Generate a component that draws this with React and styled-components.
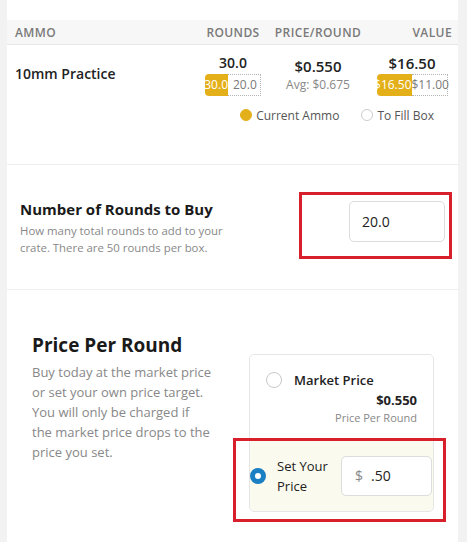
import styled, { createGlobalStyle } from "styled-components";

const GlobalStyle = createGlobalStyle`
  html, body {
    margin: 0;
    padding: 0;
    background: #f2f2f2;
    font-family: "Open Sans", "Liberation Sans", sans-serif;
    color: #222;
  }
`;

const Panel = styled.div`
  width: 451px;
  margin-left: 7px;
  background: #fff;
  padding-top: 20px;
  min-height: 560px;
`;

const COLS = "1fr 62px 108px 80px";

const HeadRow = styled.div`
  display: grid;
  grid-template-columns: ${COLS};
  height: 24px;
  align-items: center;
  padding: 0 6px 0 8px;
  background: #f7f7f7;
  border-bottom: 1px solid #e6e6e6;
`;

const HeadCell = styled.div`
  font-size: 12px;
  font-weight: 600;
  letter-spacing: 0.4px;
  color: #7a7a7a;
  text-align: ${(p) => p.$align || "left"};
`;

const DataRow = styled.div`
  display: grid;
  grid-template-columns: ${COLS};
  padding: 9px 6px 0 8px;
  align-items: start;
`;

const AmmoName = styled.div`
  margin-top: 11px;
  font-size: 14px;
  font-weight: 600;
  color: #222;
  line-height: 18px;
`;

const Cell = styled.div`
  display: flex;
  flex-direction: column;
  align-items: ${(p) => p.$align || "center"};
`;

const Amount = styled.div`
  font-size: ${(p) => p.$size || 14}px;
  font-weight: 600;
  line-height: 18px;
  color: #222;
  margin-top: ${(p) => p.$top || 0}px;
`;

const Avg = styled.div`
  font-size: 12px;
  color: #888;
  line-height: 18px;
  margin-top: 1px;
`;

const Bars = styled.div`
  display: flex;
  margin-top: 2px;
  height: 22px;
`;

// filled part: text sits at the right edge, clipped on the left when it runs over
const FillBar = styled.div`
  display: flex;
  justify-content: flex-end;
  overflow: hidden;
  white-space: nowrap;
  background: #e4b01a;
  color: #fff;
  font-size: 12px;
  line-height: 22px;
  border-radius: 4px 0 0 4px;
`;

const RestBar = styled.div`
  box-sizing: border-box;
  border: 1px dotted #b5b5b5;
  border-left: none;
  color: #7a7a7a;
  font-size: 12px;
  line-height: 20px;
  padding-left: ${(p) => p.$pad || 0}px;
  white-space: nowrap;
`;

const Legend = styled.div`
  display: flex;
  justify-content: flex-end;
  align-items: center;
  gap: 22px;
  padding: 8px 24px 0 0;
  height: 22px;
`;

const LegendItem = styled.div`
  display: flex;
  align-items: center;
  gap: 4px;
  font-size: 12px;
  color: #555;
`;

const Dot = styled.span`
  width: 12px;
  height: 12px;
  box-sizing: border-box;
  border-radius: 50%;
  background: ${(p) => (p.$filled ? "#e4b01a" : "#fff")};
  border: 1px solid ${(p) => (p.$filled ? "#e4b01a" : "#ccc")};
`;

const Divider = styled.div`
  height: 1px;
  background: #eeeeee;
  margin-top: ${(p) => p.$top || 0}px;
`;

const RoundsSection = styled.div`
  display: flex;
  align-items: center;
  justify-content: space-between;
  height: 124px;
  padding: 0 6px 0 13px;
`;

const Title = styled.div`
  font-size: ${(p) => p.$size || 15}px;
  font-weight: 700;
  color: #1a1a1a;
  line-height: ${(p) => p.$lh || 20}px;
`;

const Desc = styled.div`
  font-size: ${(p) => p.$size || 11.4}px;
  line-height: ${(p) => p.$lh || 17}px;
  color: #888;
  max-width: ${(p) => p.$max || 210}px;
  margin-top: ${(p) => p.$top || 3}px;
`;

const Highlight = styled.div`
  box-sizing: border-box;
  width: 153px;
  height: 67px;
  border: 3px solid #d8202c;
  display: flex;
  justify-content: flex-end;
  padding: 6px 4px 0 0;
  margin-top: -3px;
`;

const TextBox = styled.div`
  box-sizing: border-box;
  flex: none;
  width: ${(p) => p.$w}px;
  height: ${(p) => p.$h}px;
  border: 1px solid #dcdcdc;
  border-radius: 5px;
  background: #fff;
  display: flex;
  align-items: center;
  padding-left: ${(p) => p.$pad || 12}px;
  font-size: 14px;
  color: #222;
  gap: 8px;
`;

const Currency = styled.span`
  color: #888;
`;

const PriceSection = styled.div`
  display: flex;
  justify-content: space-between;
  align-items: flex-start;
  padding: 0 24px 40px 25px;
`;

const PriceInfo = styled.div`
  padding-top: 42px;
`;

const Card = styled.div`
  width: 185px;
  box-sizing: border-box;
  margin-top: 64px;
  border: 1px solid #e6e6e6;
  border-radius: 5px;
`;

const Option = styled.div`
  position: relative;
  display: flex;
  align-items: ${(p) => (p.$selected ? "center" : "flex-start")};
  gap: ${(p) => (p.$selected ? 11 : 12)}px;
  padding: ${(p) => (p.$selected ? "16px 1px 15px 0" : "16px 16px 10px 16px")};
  height: ${(p) => (p.$selected ? 72 : 84)}px;
  box-sizing: border-box;
  background: ${(p) => (p.$selected ? "#fbfaee" : "#fff")};
  border-radius: ${(p) => (p.$selected ? "0 0 5px 5px" : "5px 5px 0 0")};
`;

const Radio = styled.span`
  flex: none;
  width: 16px;
  height: 16px;
  box-sizing: border-box;
  border-radius: 50%;
  background: #fff;
  border: ${(p) => (p.$checked ? "5px solid #1b7fc3" : "1px solid #c8c8c8")};
  margin-top: ${(p) => (p.$checked ? 0 : 1)}px;
`;

const OptionBody = styled.div`
  flex: 1;
  display: flex;
  flex-direction: column;
`;

const OptionLabel = styled.div`
  flex: none;
  font-size: 13px;
  font-weight: ${(p) => p.$weight || 600};
  line-height: ${(p) => p.$lh || 18}px;
  color: #222;
  width: ${(p) => (p.$w ? p.$w + "px" : "auto")};
  margin-right: ${(p) => p.$mr || 0}px;
`;

const MarketPrice = styled.div`
  text-align: right;
  font-size: 13px;
  font-weight: 700;
  line-height: 18px;
  margin-top: 2px;
`;

const MarketNote = styled.div`
  text-align: right;
  font-size: 11px;
  color: #888;
  line-height: 18px;
`;

// red annotation frame drawn over the selected option
const Annotation = styled.div`
  position: absolute;
  top: -1px;
  left: -17px;
  right: -13px;
  bottom: -11px;
  border: 3px solid #d8202c;
  pointer-events: none;
`;

export default function App() {
  return (
    <>
      <GlobalStyle />
      <Panel>
        <HeadRow>
          <HeadCell>AMMO</HeadCell>
          <HeadCell $align="center">ROUNDS</HeadCell>
          <HeadCell $align="center">PRICE/ROUND</HeadCell>
          <HeadCell $align="right">VALUE</HeadCell>
        </HeadRow>
        <DataRow>
          <AmmoName>10mm Practice</AmmoName>
          <Cell>
            <Amount>30.0</Amount>
            <Bars>
              <FillBar style={{ width: 23 }}>30.0</FillBar>
              <RestBar style={{ width: 33 }} $pad={5}>20.0</RestBar>
            </Bars>
          </Cell>
          <Cell>
            <Amount $size={15} $top={3}>$0.550</Amount>
            <Avg>Avg: $0.675</Avg>
          </Cell>
          <Cell>
            <Amount $size={15}>$16.50</Amount>
            <Bars>
              <FillBar style={{ width: 35 }}>$16.50</FillBar>
              <RestBar style={{ width: 36 }}>$11.00</RestBar>
            </Bars>
          </Cell>
        </DataRow>
        <Legend>
          <LegendItem>
            <Dot $filled />
            Current Ammo
          </LegendItem>
          <LegendItem>
            <Dot />
            To Fill Box
          </LegendItem>
        </Legend>
        <Divider $top={38} />
        <RoundsSection>
          <div>
            <Title>Number of Rounds to Buy</Title>
            <Desc>How many total rounds to add to your crate. There are 50 rounds per box.</Desc>
          </div>
          <Highlight>
            <TextBox $w={96} $h={41}>20.0</TextBox>
          </Highlight>
        </RoundsSection>
        <Divider />
        <PriceSection>
          <PriceInfo>
            <Title $size={19} $lh={26}>Price Per Round</Title>
            <Desc $size={13} $lh={20} $max={190} $top={4}>
              Buy today at the market price<br />
              or set your own price target.<br />
              You will only be charged if<br />
              the market price drops to the<br />
              price you set.
            </Desc>
          </PriceInfo>
          <Card>
            <Option>
              <Radio />
              <OptionBody>
                <OptionLabel>Market Price</OptionLabel>
                <MarketPrice>$0.550</MarketPrice>
                <MarketNote>Price Per Round</MarketNote>
              </OptionBody>
            </Option>
            <Option $selected>
              <Radio $checked />
              <OptionLabel $lh={20} $w={60} $mr={-7} $weight={500}>Set Your Price</OptionLabel>
              <TextBox $w={91} $h={40} $pad={13}>
                <Currency>$</Currency>.50
              </TextBox>
              <Annotation />
            </Option>
          </Card>
        </PriceSection>
      </Panel>
    </>
  );
}
